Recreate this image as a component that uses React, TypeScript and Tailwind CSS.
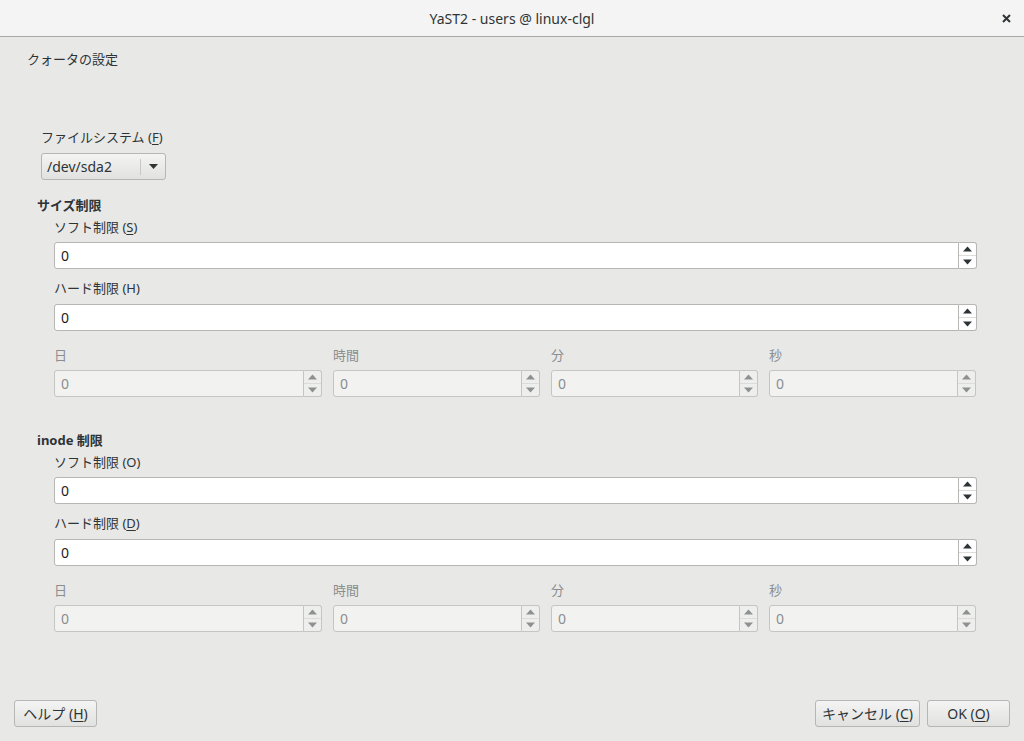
import { ReactNode } from 'react';

const font = { fontFamily: '"Noto Sans", "Noto Sans CJK JP", sans-serif' };

function Mn({ children }: { children: ReactNode }) {
  return <span className="underline underline-offset-2">{children}</span>;
}

function Spin({ disabled }: { disabled?: boolean }) {
  const arrow = disabled ? 'fill-[#8e9192]' : 'fill-[#2e3436]';
  return (
    <div
      className={`flex flex-col w-[18px] h-[27px] border rounded-r-[3px] border-l-0 ${
        disabled ? 'border-[#c5c5c2] bg-[#eeeeec]' : 'border-[#b6b6b3] bg-white'
      }`}
    >
      <div className="flex-1 flex items-center justify-center border-b border-[#dcdcda]">
        <svg width="9" height="6" viewBox="0 0 9 6" className={arrow}>
          <path d="M0 5.5 L4.5 0.5 L9 5.5 Z" />
        </svg>
      </div>
      <div className="flex-1 flex items-center justify-center">
        <svg width="9" height="6" viewBox="0 0 9 6" className={arrow}>
          <path d="M0 0.5 L4.5 5.5 L9 0.5 Z" />
        </svg>
      </div>
    </div>
  );
}

function SpinField({ disabled }: { disabled?: boolean }) {
  return (
    <div className="flex">
      <div
        className={`flex-1 h-[27px] flex items-center px-[6px] border rounded-l-[3px] text-[14px] ${
          disabled
            ? 'border-[#c5c5c2] bg-[#f2f2f1] text-[#8b8e8f]'
            : 'border-[#b6b6b3] bg-white text-[#1c1c1c]'
        }`}
      >
        0
      </div>
      <Spin disabled={disabled} />
    </div>
  );
}

function TimeRow() {
  const labels = ['日', '時間', '分', '秒'];
  return (
    <div className="grid grid-cols-[268px_1fr_1fr_1fr] gap-x-[11px] pr-[1px]">
      {labels.map(l => (
        <div key={l}>
          <div className="text-[13px] text-[#8b8e8f] h-[16px] leading-[16px] mb-[7px]">{l}</div>
          <SpinField disabled />
        </div>
      ))}
    </div>
  );
}

function LimitSection({ title, soft, hard }: { title: ReactNode; soft: ReactNode; hard: ReactNode }) {
  return (
    <section>
      <h4 className="font-bold text-[13px] text-[#2e3436] leading-[16px] h-[16px]">{title}</h4>
      <div className="pl-[17px] pr-[47px]">
        <div className="text-[13px] leading-[16px] mt-[6px] mb-[7px]">{soft}</div>
        <SpinField />
        <div className="text-[13px] leading-[16px] mt-[11px] mb-[8px]">{hard}</div>
        <SpinField />
        <div className="mt-[16px]">
          <TimeRow />
        </div>
      </div>
    </section>
  );
}

function Button({ children, w }: { children: ReactNode; w: string }) {
  return (
    <button
      className={`${w} h-[27px] text-[14px] text-[#2e3436] border border-[#b6b6b3] rounded-[3px] bg-gradient-to-b from-[#f4f4f4] to-[#e1e1df] flex items-center justify-center`}
    >
      {children}
    </button>
  );
}

export default function App() {
  return (
    <div style={font} className="w-[1024px] h-[741px] flex flex-col bg-[#e8e8e7] text-[#2e3436] overflow-hidden">
      <header className="h-[37px] flex items-center bg-[#f4f4f4] border-b border-[#a9a9a6] shrink-0">
        <div className="w-[40px]" />
        <div className="flex-1 text-center text-[14px] text-[#2e3436]">YaST2 - users @ linux-clgl</div>
        <div className="w-[40px] flex justify-center pl-[4px]">
          <svg width="9" height="9" viewBox="0 0 9 9" stroke="#2e3436" strokeWidth="2">
            <path d="M1 1 L8 8 M8 1 L1 8" />
          </svg>
        </div>
      </header>

      <main className="flex-1 flex flex-col">
        <div className="text-[13px] pl-[27px] pt-[14px] leading-[16px]">クォータの設定</div>

        <div className="pl-[37px] mt-[62px]">
          <div className="pl-[4px]">
            <div className="text-[13px] leading-[16px]">
              ファイルシステム (<Mn>F</Mn>)
            </div>
            <div className="mt-[8px] w-[125px] h-[27px] border border-[#b6b6b3] rounded-[3px] bg-gradient-to-b from-[#f4f4f4] to-[#e1e1df] flex items-center">
              <span className="flex-1 pl-[5px] text-[14px]">/dev/sda2</span>
              <span className="h-[16px] border-l border-[#c8c8c5]" />
              <span className="w-[24px] flex justify-center">
                <svg width="9" height="5" viewBox="0 0 9 5" className="fill-[#2e3436]">
                  <path d="M0 0 L4.5 5 L9 0 Z" />
                </svg>
              </span>
            </div>
          </div>

          <div className="mt-[17px]">
            <LimitSection
              title="サイズ制限"
              soft={<>ソフト制限 (<Mn>S</Mn>)</>}
              hard="ハード制限 (H)"
            />
          </div>

          <div className="mt-[35px]">
            <LimitSection
              title="inode 制限"
              soft="ソフト制限 (O)"
              hard={<>ハード制限 (<Mn>D</Mn>)</>}
            />
          </div>
        </div>

        <footer className="mt-auto mb-[14px] px-[14px] flex items-center">
          <Button w="w-[83px]">
            ヘルプ (<Mn>H</Mn>)
          </Button>
          <div className="flex-1" />
          <Button w="w-[105px]">
            キャンセル (<Mn>C</Mn>)
          </Button>
          <div className="w-[7px]" />
          <Button w="w-[83px]">
            OK (<Mn>O</Mn>)
          </Button>
        </footer>
      </main>
    </div>
  );
}
